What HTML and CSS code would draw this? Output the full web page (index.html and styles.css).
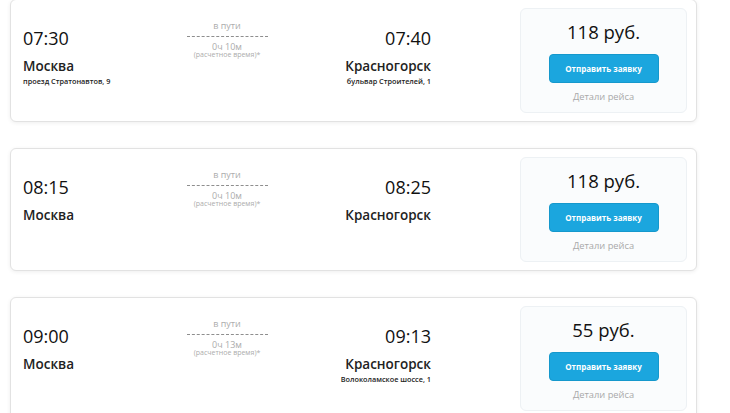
FILE: index.html
```html
<!DOCTYPE html>
<html lang="ru">
<head>
<meta charset="utf-8">
<link rel="stylesheet" href="styles.css">
</head>
<body>
<div class="list">
  <div class="card">
    <div class="route">
      <div class="point">
        <div class="time">07:30</div>
        <div class="city">Москва</div>
        <div class="addr">проезд Стратонавтов, 9</div>
      </div>
      <div class="middle">
        <div class="way">в пути</div>
        <div class="dur">0ч 10м</div>
        <div class="note">(расчетное время)*</div>
      </div>
      <div class="point end">
        <div class="time">07:40</div>
        <div class="city">Красногорск</div>
        <div class="addr">бульвар Строителей, 1</div>
      </div>
    </div>
    <div class="pricebox">
      <div class="price">118 руб.</div>
      <button class="btn">Отправить заявку</button>
      <div class="details">Детали рейса</div>
    </div>
  </div>
  <div class="card">
    <div class="route">
      <div class="point">
        <div class="time">08:15</div>
        <div class="city">Москва</div>
      </div>
      <div class="middle">
        <div class="way">в пути</div>
        <div class="dur">0ч 10м</div>
        <div class="note">(расчетное время)*</div>
      </div>
      <div class="point end">
        <div class="time">08:25</div>
        <div class="city">Красногорск</div>
      </div>
    </div>
    <div class="pricebox">
      <div class="price">118 руб.</div>
      <button class="btn">Отправить заявку</button>
      <div class="details">Детали рейса</div>
    </div>
  </div>
  <div class="card">
    <div class="route">
      <div class="point">
        <div class="time">09:00</div>
        <div class="city">Москва</div>
      </div>
      <div class="middle">
        <div class="way">в пути</div>
        <div class="dur">0ч 13м</div>
        <div class="note">(расчетное время)*</div>
      </div>
      <div class="point end">
        <div class="time">09:13</div>
        <div class="city">Красногорск</div>
        <div class="addr">Волоколамское шоссе, 1</div>
      </div>
    </div>
    <div class="pricebox">
      <div class="price">55 руб.</div>
      <button class="btn">Отправить заявку</button>
      <div class="details">Детали рейса</div>
    </div>
  </div>
</div>
</body>
</html>
```

FILE: styles.css
```css
html, body {
  margin: 0;
  padding: 0;
  background: #ffffff;
  font-family: "Open Sans", "Noto Sans", sans-serif;
  color: #111;
  overflow: hidden;
}
.list {
  display: flex;
  flex-direction: column;
  gap: 26px;
  margin-top: -1px;
  padding-left: 10px;
  width: 687px;
}
.card {
  box-sizing: border-box;
  height: 123px;
  display: flex;
  padding: 8px 9px 8px 12px;
  border: 1px solid #e2e2e2;
  border-radius: 6px;
  box-shadow: 0 1px 4px rgba(0,0,0,0.07);
  background: #fff;
}
.route {
  width: 408px;
  display: grid;
  grid-template-columns: 1fr 81px 1fr;
  align-items: start;
}
.point {
  display: flex;
  flex-direction: column;
}
.point.end {
  align-items: flex-end;
}
.time {
  font-size: 18px;
  line-height: 24px;
  margin-top: 18px;
  color: #111;
}
.city {
  font-size: 13.5px;
  font-weight: 600;
  line-height: 18px;
  margin-top: 7px;
  color: #222;
}
.addr {
  font-size: 7.3px;
  font-weight: 600;
  line-height: 12px;
  color: #222;
}
.middle {
  display: flex;
  flex-direction: column;
  align-items: center;
  color: #acacac;
}
.way {
  font-size: 9px;
  line-height: 10px;
  margin-top: 13px;
  width: 100%;
  text-align: center;
  padding-bottom: 5px;
  border-bottom: 1px dashed #8e8e8e;
}
.dur {
  font-size: 9px;
  line-height: 10px;
  margin-top: 5px;
}
.note {
  font-size: 7px;
  line-height: 8px;
  margin-top: -1px;
}
.pricebox {
  margin-left: auto;
  width: 167px;
  box-sizing: border-box;
  display: flex;
  flex-direction: column;
  align-items: center;
  background: #fafcfd;
  border: 1px solid #edf1f4;
  border-radius: 6px;
}
.price {
  font-size: 18.5px;
  line-height: 24px;
  margin-top: 11px;
  color: #111;
}
.btn {
  margin-top: 10px;
  width: 110px;
  height: 29px;
  border: 1px solid #1598cc;
  border-radius: 4px;
  background: #1ba6de;
  color: #fff;
  font-family: "Open Sans", "Noto Sans", sans-serif;
  font-size: 8px;
  font-weight: 700;
  padding: 0;
  cursor: pointer;
}
.details {
  margin-top: 7px;
  font-size: 9.3px;
  line-height: 14px;
  color: #a9a9a9;
}
```
